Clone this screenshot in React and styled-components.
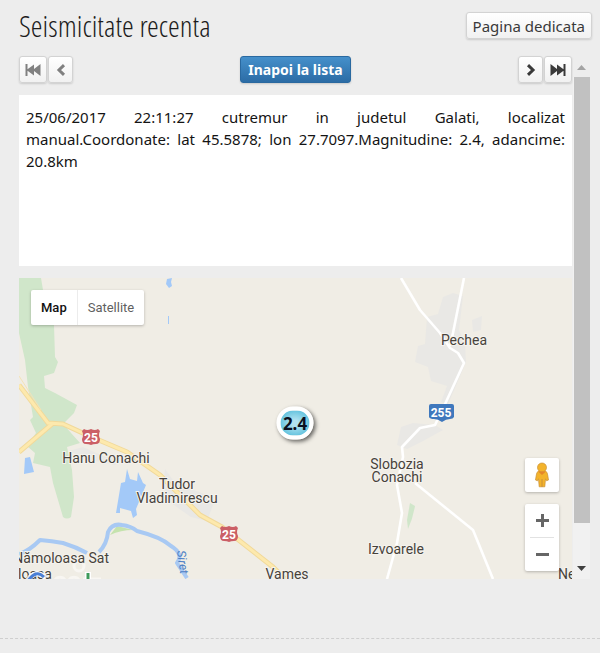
import React from "react";
import styled, { createGlobalStyle } from "styled-components";

const bodyFont = `"Noto Sans", "Open Sans", sans-serif`;
const mapFont = `Roboto, "Liberation Sans", sans-serif`;

const data = {
    title: "Seismicitate recenta",
    pageButton: "Pagina dedicata",
    listButton: "Inapoi la lista",
    event: "25/06/2017 22:11:27 cutremur in judetul Galati, localizat manual.Coordonate: lat 45.5878; lon 27.7097.Magnitudine: 2.4, adancime: 20.8km",
    magnitude: "2.4",
};

const places = [
    { name: "Pechea", x: 445, y: 67 },
    { name: "Slobozia", x: 378, y: 191 },
    { name: "Conachi", x: 378, y: 204 },
    { name: "Izvoarele", x: 377, y: 276 },
    { name: "Hanu Conachi", x: 87, y: 185 },
    { name: "Tudor", x: 158, y: 211 },
    { name: "Vladimirescu", x: 158, y: 225 },
    { name: "Vames", x: 268, y: 301 },
    { name: "Nămoloasa Sat", x: 90, y: 285, anchor: "end" },
    { name: "loasa", x: -1, y: 301, anchor: "start" },
    { name: "Negrea", x: 539, y: 301, anchor: "start" },
];

const GlobalStyle = createGlobalStyle`
    * {
        box-sizing: border-box;
    }

    body {
        margin: 0;
        background: #ededed;
        font-family: ${bodyFont};
    }
`;

const Widget = styled.section`
    padding: 12px 8px 59px 19px;
    border-bottom: 1px dashed #cfcfcf;
`;

const Header = styled.header`
    display: flex;
    justify-content: space-between;
    align-items: flex-start;
    height: 44px;
`;

const Title = styled.h2`
    margin: 0;
    color: #1c1c1c;
    font-family: "Open Sans Condensed Light", "Roboto Condensed", "Liberation Sans", sans-serif;
    font-size: 30px;
    font-weight: 400;
    line-height: 28px;
`;

const Button = styled.button`
    display: inline-flex;
    align-items: center;
    justify-content: center;
    height: 27px;
    min-width: ${({ $width }) => $width || "0"};
    padding: 0 ${({ $width, $primary }) => ($width ? "4px" : $primary ? "7px" : "6px")};
    border: 1px solid ${({ $primary }) => ($primary ? "#2a69a0" : "#d3d3d3")};
    border-radius: 3px;
    background: ${({ $primary }) =>
        $primary
            ? "linear-gradient(#4590cb, #2c6ca5)"
            : "linear-gradient(#ffffff, #f1f1f1)"};
    box-shadow: 0 1px 2px rgba(0, 0, 0, 0.15);
    color: ${({ $primary }) => ($primary ? "#ffffff" : "#3a3a3a")};
    font-family: ${bodyFont};
    font-size: ${({ $primary }) => ($primary ? "14px" : "15px")};
    font-weight: ${({ $primary }) => ($primary ? 700 : 400)};
    line-height: 20px;
    cursor: pointer;

    &:disabled {
        color: #808080;
        cursor: default;
    }
`;

const Body = styled.div`
    display: flex;
    align-items: stretch;
`;

const Content = styled.div`
    flex: 1;
    min-width: 0;
`;

const Toolbar = styled.nav`
    display: flex;
    justify-content: space-between;
    align-items: center;
    margin-bottom: 12px;
`;

const ButtonGroup = styled.div`
    display: flex;
    gap: 1px;
`;

const EventText = styled.p`
    margin: 0 0 12px;
    padding: 11px 7px;
    min-height: 171px;
    background: #ffffff;
    color: #141414;
    font-size: 15px;
    line-height: 22px;
    text-align: justify;
`;

const MapFrame = styled.div`
    position: relative;
    height: 301px;
    overflow: hidden;
    background: #f0ede5;
    font-family: ${mapFont};
`;

const MapDrawing = styled.svg`
    display: block;
    width: 100%;
    height: 100%;
`;

const PlaceName = styled.text`
    fill: #47423b;
    stroke: #f5f3ee;
    stroke-width: 2px;
    paint-order: stroke;
    font-size: 14px;
`;

const ShieldText = styled.text`
    fill: #ffffff;
    font-size: 12px;
    font-weight: 700;
    text-anchor: middle;
`;

const RiverName = styled.text`
    fill: #4d7fc4;
    font-size: 12px;
    font-style: italic;
`;

const Panel = styled.div`
    position: absolute;
    display: flex;
    background: #ffffff;
    border-radius: 2px;
    box-shadow: 0 1px 3px rgba(0, 0, 0, 0.25);
`;

const MapTypes = styled(Panel)`
    top: 12px;
    left: 12px;
    height: 35px;
`;

const MapControls = styled.div`
    position: absolute;
    right: 13px;
    bottom: 8px;
    display: flex;
    flex-direction: column;
    gap: 12px;
`;

const ControlPanel = styled(Panel)`
    position: static;
    flex-direction: column;
    align-items: center;
`;

const TypeButton = styled.button`
    padding: 0 10px;
    border: 0;
    border-left: ${({ $divided }) => ($divided ? "1px solid #ececec" : "0")};
    background: transparent;
    color: ${({ $active }) => ($active ? "#111111" : "#5f5f5f")};
    font-family: ${mapFont};
    font-size: 13px;
    font-weight: ${({ $active }) => ($active ? 500 : 400)};
    cursor: pointer;
`;

const ControlButton = styled.button`
    display: flex;
    align-items: center;
    justify-content: center;
    width: 34px;
    height: ${({ $tall }) => ($tall ? "34px" : "33px")};
    padding: 0;
    border: 0;
    background: transparent;
    cursor: pointer;
`;

const ControlDivider = styled.span`
    width: 24px;
    height: 1px;
    background: #e2e2e2;
`;

const Marker = styled.span`
    position: absolute;
    top: 145px;
    left: 276px;
    display: flex;
    align-items: center;
    justify-content: center;
    width: 37px;
    height: 33px;
    transform: translate(-50%, -50%);
    border: 4px solid #ffffff;
    border-radius: 18px;
    background: radial-gradient(#b3e3f0 15%, #62c2de 75%);
    box-shadow: 2px 2px 4px rgba(0, 0, 0, 0.6);
    color: #0b1020;
    font-family: ${bodyFont};
    font-size: 17px;
    font-weight: 700;
    line-height: 20px;
`;

const ScrollBar = styled.div`
    display: flex;
    flex-direction: column;
    align-items: center;
    width: 17px;
    margin: 4px 2px 0 1px;
    background: linear-gradient(#ededed 17px, #f1f1f1 17px);
`;

const ScrollArrow = styled.svg`
    flex: none;
    width: 17px;
    height: 17px;
`;

const ScrollTrack = styled.div`
    flex: 1;
    width: 16px;
`;

const ScrollThumb = styled.div`
    height: 92%;
    background: #c1c1c1;
`;

function SkipIcon({ flip }) {
    return (
        <svg width="16" height="12" viewBox="0 0 16 12" fill="currentColor" aria-hidden="true">
            <path
                transform={flip ? "translate(16 0) scale(-1 1)" : undefined}
                d="M0.5 0h2v12h-2zM9 0.5v4.500L15.5 0v12l-6.500-5v4.500L2.500 6.800v-1.600z"
            />
        </svg>
    );
}

function ChevronIcon({ flip }) {
    return (
        <svg width="10" height="12" viewBox="0 0 10 12" fill="none" stroke="currentColor" strokeWidth="3" aria-hidden="true">
            <path d={flip ? "M2 1.2L7 6L2 10.8" : "M8 1.2L3 6L8 10.8"} />
        </svg>
    );
}

function RouteShield({ x, y }) {
    return (
        <g transform={`translate(${x} ${y})`}>
            <path
                d="M-7-8Q-4-6 0-8Q4-6 7-8L9-6Q7-2 9 2Q9 7 5 7Q2 7 0 8Q-2 7-5 7Q-9 7-9 2Q-7-2-9-6Z"
                fill="#cb5f66"
            />
            <ShieldText y="5">25</ShieldText>
        </g>
    );
}

function MapCanvas() {
    return (
        <MapDrawing viewBox="0 0 553 301" preserveAspectRatio="xMidYMid slice" role="img" aria-label="Harta epicentrului">
            {/* forests */}
            <g fill="#d0e6ca">
                <path d="M0 0H22L24 12L35 47L36 79L39 84L35 95L25 98L26 110L36 115L58 127L55 135L44 146L61 165L48 169L53 192L55 219L52 239Q48 242 44 239L34 205L31 189L14 185L16 175L8 168L17 155L11 142L14 139L9 109L6 82L0 55Z" />
                <path d="M91 257L98 248L114 252Q102 252 91 257Z" fill="#c5e3ae" />
                <path d="M391 225l5 3q-2 12-7 23l-1-9z" />
            </g>
            {/* built-up areas */}
            <g fill="#e9e8e5">
                <path d="M424 19L434 15L444 18L440 52L446 66L447 84L436 110L429 126L422 124L428 108L412 103L409 89L396 84L399 68L406 66L408 39L419 36Z" />
                <path d="M453 42l10-4-1 14-8 2z" />
                <path d="M382 149l12-4 22 2 8 5-20 11-16 8-10-4z" />
                <path d="M146 191l10 14 32 12 6 10-6 16-16-4-20-14-8-18z" />
                <path d="M50 173l14-4 20 9 20 2-8 7-24-5z" />
            </g>
            {/* water */}
            <g fill="#a3c9f8">
                <path d="M106 204L108 191L111 201L118 203L119 194L124 205L127 207L117 231L118 237L114 240L112 233L101 230V235L97 235L102 205Z" />
                <path d="M6 180l5-1 4 15-10 2z" />
                <path d="M148 1l5-1-1 4 1 4-3 2-3-4z" />
                <path d="M149 38h1v8h-1z" />
            </g>
            <g fill="none" stroke="#a8c9f3" strokeWidth="4" strokeLinejoin="round">
                <path d="M0 276Q10 273 21 262Q33 263 44 265Q57 269 68 275M80 274Q88 266 89 254Q93 245 103 247Q112 248 118 253Q142 259 152 268Q165 276 158 285L168 300" />
            </g>
            {/* national road 25 */}
            <g fill="none" strokeLinejoin="round">
                <g stroke="#f1d99a" strokeWidth="5">
                    <path d="M0 174L33 146M0 107L29 145L44 146L68 157L108 174L141 197L181 237L203 249L254 289L266 301" />
                </g>
                <g stroke="#fde9ad" strokeWidth="3">
                    <path d="M0 174L33 146M0 107L29 145L44 146L68 157L108 174L141 197L181 237L203 249L254 289L266 301" />
                </g>
                <path d="M0 98L22 132" stroke="#f3e2b6" strokeWidth="1" />
            </g>
            {/* local roads */}
            <g fill="none" stroke="#ffffff" strokeWidth="2.6" strokeLinejoin="round">
                <path d="M382 0L401 32L421 55L431 70L439 75L445 85L427 124L416 147L401 150L383 169L384 179L378 207L383 235L378 265L368 301" />
                <path d="M445 0L434 55L431 68" />
                <path d="M396 205L454 252L474 301" />
            </g>
            <circle cx="60" cy="288" r="5" fill="none" stroke="#f8f6f2" strokeWidth="3" />

            <RouteShield x={72} y={159} />
            <RouteShield x={210} y={256} />
            <path d="M412 126h21q2 0 2 2v11q-1 2-4 2-4 0-8 3-4-3-8-3-4 0-5-2v-11q0-2 2-2z" fill="#3f78bd" />
            <ShieldText x="422" y="139">255</ShieldText>

            {places.map(({ name, x, y, anchor = "middle" }) => (
                <PlaceName key={name} x={x} y={y} textAnchor={anchor}>
                    {name}
                </PlaceName>
            ))}
            <RiverName transform="translate(158 273) rotate(82)">Siret</RiverName>

            {/* provider logo, cut by the map edge */}
            <g fill="none">
                <path d="M8 303Q17 290 27 300" stroke="#ffffff" strokeOpacity="0.8" strokeWidth="5" />
                <path d="M36 302a6 6 0 0 1 10 0M50 302a6 6 0 0 1 10 0M64 301h18" stroke="#ffffff" strokeOpacity="0.5" strokeWidth="3" />
                <path d="M9 303Q17 291 25 299" stroke="#4a7fd6" strokeWidth="3" />
                <path d="M69 294v7" stroke="#ffffff" strokeWidth="6" />
                <path d="M69 295v6" stroke="#3f9b5b" strokeWidth="3" />
            </g>
        </MapDrawing>
    );
}

function Pegman() {
    return (
        <svg width="16" height="26" viewBox="0 0 16 26" aria-hidden="true">
            <path
                d="M4.5 9h7q2 1 2.2 4l.8 5-2 .8-1-2-.7 8H5.2l-.7-8-1 2-2-.8.8-5Q2.500 10 4.500 9z"
                fill="#f3b32b"
                stroke="#c9903a"
                strokeWidth="0.7"
            />
            <circle cx="8" cy="5.500" r="4.500" fill="#f3b32b" stroke="#c9903a" strokeWidth="0.7" />
            <path d="M4 9.500h8L8 13z" fill="#e5862a" />
            <path d="M8 17v8" stroke="#c9903a" />
        </svg>
    );
}

function EventMap() {
    return (
        <MapFrame>
            <MapCanvas />
            <Marker>{data.magnitude}</Marker>
            <MapTypes>
                <TypeButton type="button" $active>
                    Map
                </TypeButton>
                <TypeButton type="button" $divided>
                    Satellite
                </TypeButton>
            </MapTypes>
            <MapControls>
                <ControlPanel>
                    <ControlButton type="button" $tall aria-label="Street View">
                        <Pegman />
                    </ControlButton>
                </ControlPanel>
                <ControlPanel>
                    <ControlButton type="button" aria-label="Zoom in">
                        <svg width="13" height="13" viewBox="0 0 13 13" stroke="#666666" strokeWidth="3" aria-hidden="true">
                            <path d="M0 6.500h13M6.500 0v13" />
                        </svg>
                    </ControlButton>
                    <ControlDivider />
                    <ControlButton type="button" aria-label="Zoom out">
                        <svg width="13" height="13" viewBox="0 0 13 13" stroke="#666666" strokeWidth="3" aria-hidden="true">
                            <path d="M0 6.500h13" />
                        </svg>
                    </ControlButton>
                </ControlPanel>
            </MapControls>
        </MapFrame>
    );
}

function App() {
    return (
        <>
            <GlobalStyle />
            <Widget>
                <Header>
                    <Title>{data.title}</Title>
                    <Button type="button">{data.pageButton}</Button>
                </Header>
                <Body>
                    <Content>
                        <Toolbar>
                            <ButtonGroup>
                                <Button type="button" $width="28px" disabled aria-label="Primul">
                                    <SkipIcon />
                                </Button>
                                <Button type="button" $width="25px" disabled aria-label="Anterior">
                                    <ChevronIcon />
                                </Button>
                            </ButtonGroup>
                            <Button type="button" $primary>
                                {data.listButton}
                            </Button>
                            <ButtonGroup>
                                <Button type="button" $width="25px" aria-label="Urmator">
                                    <ChevronIcon flip />
                                </Button>
                                <Button type="button" $width="28px" aria-label="Ultimul">
                                    <SkipIcon flip />
                                </Button>
                            </ButtonGroup>
                        </Toolbar>
                        <EventText>{data.event}</EventText>
                        <EventMap />
                    </Content>
                    <ScrollBar aria-hidden="true">
                        <ScrollArrow viewBox="0 0 17 17">
                            <path d="M4 10h9L8.500 5z" fill="#a3a3a3" />
                        </ScrollArrow>
                        <ScrollTrack>
                            <ScrollThumb />
                        </ScrollTrack>
                        <ScrollArrow viewBox="0 0 17 17">
                            <path d="M4 4h9L8.500 9z" fill="#404040" />
                        </ScrollArrow>
                    </ScrollBar>
                </Body>
            </Widget>
        </>
    );
}

export default App;
